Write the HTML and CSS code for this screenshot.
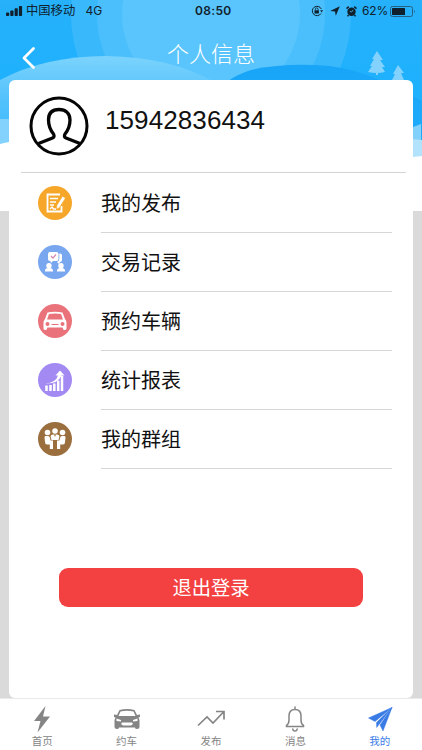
FILE: index.html
```html
<!DOCTYPE html>
<html lang="zh-CN">
<head>
<meta charset="utf-8">
<title>个人信息</title>
<link rel="stylesheet" href="styles.css">
</head>
<body>
<div class="screen">
  <svg class="scene" viewBox="0 0 422 211" width="422" height="211" aria-hidden="true">
    <defs>
      <linearGradient id="sky" x1="0" y1="0" x2="0" y2="1"><stop offset="0" stop-color="#26b1fa"/><stop offset=".55" stop-color="#1cb1ff"/><stop offset="1" stop-color="#38bbff"/></linearGradient>
      <linearGradient id="hill" x1="0" y1="0" x2="0" y2="1"><stop offset="0" stop-color="#7bd3fc"/><stop offset=".4" stop-color="#54c2fc"/><stop offset="1" stop-color="#32b6fc"/></linearGradient>
      <linearGradient id="ridge" x1="0" y1="0" x2="0" y2="1"><stop offset="0" stop-color="#18a5f8"/><stop offset="1" stop-color="#26b2ff"/></linearGradient>
    </defs>
    <rect width="422" height="211" fill="url(#sky)"/>
    <circle cx="211" cy="14" r="140" fill="#3ab8fc"/>
    <circle cx="211" cy="14" r="114" fill="#4bbffc"/>
    <circle cx="211" cy="14" r="89" fill="#5ac5fd"/>
    <path d="M211 100Q222 79 251 70Q285 62 330 66Q370 71 422 101V211H211Z" fill="url(#ridge)"/>
    <path d="M0 80Q45 56 106 56Q171 57 214 82V160H0Z" fill="url(#hill)"/>
    <path d="M0 119H30V160H0Z" fill="#83d2fd"/>
    <path d="M400 132L421 124V142H400Z" fill="#82d0fc"/>
    <path d="M400 138L422 140V160H400Z" fill="#b3e2fd"/>
    <path d="M0 144Q10 141 22 141H400L413 157L422 156V211H0Z" fill="#fff"/>
    <g fill="#83d2fe">
      <path d="M377 51L383 60H380L385 67H382L385 72Q377 74 368 72L372 66H370L374 59H372ZM376 72H378V75H376Z"/>
      <path d="M398 65L404 73H401L404 80H392L395 74H393Z"/>
    </g>
  </svg>

  <header class="status">
    <svg class="signal" viewBox="0 0 17 10"><rect x="0" y="6.5" width="3.2" height="3.5" rx=".8"/><rect x="4.3" y="4.5" width="3.2" height="5.5" rx=".8"/><rect x="8.6" y="2.3" width="3.2" height="7.7" rx=".8"/><rect x="12.9" y="0" width="3.2" height="10" rx=".8"/></svg>
    <span class="carrier">中国移动</span>
    <span class="network">4G</span>
    <span class="clock">08:50</span>
    <svg class="lock" viewBox="0 0 12 12"><path d="M10 8.5A4.7 4.7 0 1 1 10.3 4" fill="none" stroke="#10202c" stroke-width="1"/><path d="M9.2 5.3H12L10.7 7.4Z"/><rect x="3.5" y="5.2" width="4.4" height="3.4" rx=".4"/><path d="M4.4 5.4V4.2a1.3 1.3 0 0 1 2.6 0V5.4" fill="none" stroke="#10202c" stroke-width=".8"/></svg>
    <svg class="locate" viewBox="0 0 10 10"><path d="M9.8.2L5.8 9.8L5 5.600L.2 5Z"/></svg>
    <svg class="alarm" viewBox="0 0 11 11"><circle cx="5.5" cy="5.8" r="4.2"/><path d="M.5 2.6L2.8.6M10.5 2.6L8.2.6M2.5 9L1.5 10.4M8.5 9L9.5 10.4" stroke="#10202c" stroke-width="1.4"/><path d="M7.2 4L5.5 6L3.8 5.4" fill="none" stroke="#58bff6" stroke-width=".8"/></svg>
    <span class="percent">62%</span>
    <svg class="battery" viewBox="0 0 26 11"><rect x=".5" y=".5" width="22" height="10" rx="2" fill="none" stroke="#275f83"/><rect x="2" y="2" width="13" height="7" rx=".6"/><path d="M24 3.7Q25.8 5.5 24 7.3Z" fill="#275f83"/></svg>
  </header>

  <nav class="titlebar">
    <svg class="back" viewBox="0 0 14 24"><path d="M11.5 2.5L2 12L11.5 21.5" fill="none" stroke="#fff" stroke-width="2.8" stroke-linecap="round" stroke-linejoin="round"/></svg>
    <h1>个人信息</h1>
  </nav>

  <main class="card">
    <section class="profile">
      <svg class="avatar" viewBox="0 0 60 60"><g fill="none" stroke="#050505" stroke-linejoin="round"><circle cx="30" cy="30" r="28" stroke-width="3"/><path d="M9.5 47.5L23.5 42Q26 41 24.5 38C20.500 33 19.500 29 19.500 24C19.500 17 23.500 13.500 30 13.500S41 17 41 24C41 29 40 33 36 38Q34.500 41 37 42L51 47.500" stroke-width="3.300"/></g></svg>
      <span class="phone">15942836434</span>
    </section>

    <ul class="menu">
      <li>
        <svg class="badge" viewBox="0 0 34 34"><circle cx="17" cy="17" r="17" fill="#f6a72a"/><path d="M22 8.500H9.500V25.500H23.500V20" fill="none" stroke="#fff" stroke-width="1.800"/><path d="M12 12.500H20M12 16H18M12 19H16M12 23L14 21L15.500 23H18" fill="none" stroke="#fff" stroke-width="1.300"/><path d="M24.500 10.200L27.500 12L21.500 21.500L18.500 23.500L18.800 19.500Z" fill="#fff" stroke="#f6a72a" stroke-width=".6"/></svg>
        <span>我的发布</span>
      </li>
      <li>
        <svg class="badge" viewBox="0 0 34 34"><circle cx="17" cy="17" r="17" fill="#79a7ef"/><g fill="#fff"><path d="M21.300 8.500H22Q24 8.500 24 10.500V15Q24 17 22 17L21 19L19 17Q21.300 16 21.300 14Z"/><rect x="10" y="7" width="10.500" height="9" rx="2"/><path d="M12 15L13 18L16 15Z"/><circle cx="11" cy="20.800" r="2.700"/><circle cx="23" cy="20.800" r="2.700"/><path d="M7 26.500V25Q7.500 23 10 23H12Q14 23 15 25V26.500ZM19 26.500V25Q20 23 22 23H24Q26 23 27 25V26.500Z"/></g><path d="M13 11L15 13L18 9.500" fill="none" stroke="#d58ab4" stroke-width="1.200"/></svg>
        <span>交易记录</span>
      </li>
      <li>
        <svg class="badge" viewBox="0 0 34 34"><circle cx="17" cy="17" r="17" fill="#ea737b"/><path d="M9.500 8.500Q17 6.800 24.500 8.500L27 15Q28.500 16.500 28.500 18.500V24.500Q28.500 26 26.500 26Q24.700 26 24.700 23.500H9.300Q9.300 26 7.500 26Q5.500 26 5.500 24.500V18.500Q5.500 16.500 7 15Z" fill="#fff"/><path d="M11 10Q17 9 23 10L25 15.500H9Z" fill="#ea737b"/><circle cx="9.500" cy="20" r="2" fill="#ea737b"/><circle cx="24.500" cy="20" r="2" fill="#ea737b"/><path d="M13.500 20.500H20.500" stroke="#ea737b"/></svg>
        <span>预约车辆</span>
      </li>
      <li>
        <svg class="badge" viewBox="0 0 34 34"><circle cx="17" cy="17" r="17" fill="#a28af2"/><path d="M8.500 28V22.500M12.500 28V22M16.300 28V20.500M20.200 28V17.500M24 28V13" stroke="#fff" stroke-width="2.500"/><path d="M7.500 20.500Q18 19.500 20 12.500H17.500L22 7.500L26.500 12.500H23.500Q20 21 7.500 20.500Z" fill="#fff"/></svg>
        <span>统计报表</span>
      </li>
      <li>
        <svg class="badge" viewBox="0 0 34 34"><circle cx="17" cy="17" r="17" fill="#9b6e3e"/><g fill="#fff"><circle cx="9.500" cy="10.500" r="2.800"/><circle cx="17" cy="9" r="2.800"/><circle cx="24.500" cy="10.500" r="2.800"/><path d="M7.500 14H10Q11.500 14 12 16L12.500 18.500H15V27H11.800V22.500H9Q7 22.500 7 20L6.500 15.500Q6.500 14 7.500 14ZM26.500 14H24Q22.500 14 22 16L21.500 18.500H19V27H22.200V22.500H25Q27 22.500 27 20L27.500 15.500Q27.500 14 26.500 14ZM12.500 14Q13 12.500 15 12.500H19Q21 12.500 21.500 14L20.500 18H13.500Z"/></g><path d="M16 12.500H18L17 15Z" fill="#9b6e3e"/></svg>
        <span>我的群组</span>
      </li>
    </ul>

    <button class="logout">退出登录</button>
  </main>

  <footer class="tabs">
    <a><svg viewBox="0 0 28 28"><path d="M17.500 1L6 16H12.500L9.500 27.500L22 11.500H15Z" fill="#858585"/></svg><span>首页</span></a>
    <a><svg viewBox="0 0 28 28"><path d="M6.500 5Q14 3 21.500 5L24 10L27 9.500V12L25.500 12.500L26.500 15V22Q26.500 24 24 24Q22 24 22 22.500H6Q6 24 4 24Q1.500 24 1.500 22V15L2.500 12.500L1 12V9.500L4 10Z" fill="#858585"/><path d="M7.500 6.500Q14 5 20.500 6.500L22.500 11H5.500ZM3.500 13.500L8 15V16.500L3.500 16ZM24.500 13.500L20 15V16.500L24.500 16ZM9 17.500H19L20 19L18 20.500H10L8 19Z" fill="#fff"/></svg><span>约车</span></a>
    <a><svg viewBox="0 0 28 28"><path d="M1 20.500L10 12L16 18L26.500 7M19 6.500H27V14.500" fill="none" stroke="#858585" stroke-width="1.700"/></svg><span>发布</span></a>
    <a><svg viewBox="0 0 28 28"><path d="M5.500 21.500V20.500Q8 19 8 15V11C8 6.500 10.500 4.500 14 4.500S20 6.500 20 11V15Q20 19 22.500 20.500V21.500ZM14 2V4.500M11.800 24Q12 26 14 26T16.200 24" fill="none" stroke="#858585" stroke-width="1.500" stroke-linecap="round"/></svg><span>消息</span></a>
    <a class="active"><svg viewBox="0 0 28 28"><path d="M26 2.500L2.500 13L9 16.500ZM26 2.500L10.500 17.500L10.700 22.500L13.200 19.200ZM26 2.500L14 20L17 26Z" fill="#397be5" stroke="#397be5" stroke-width=".5"/></svg><span>我的</span></a>
  </footer>
</div>
</body>
</html>
```
FILE: styles.css
```css
* { box-sizing: border-box; }

body {
  margin: 0;
  font-family: "Liberation Sans", "Noto Sans CJK SC", sans-serif;
  color: #111;
}

.screen {
  position: relative;
  isolation: isolate;
  display: flex;
  flex-direction: column;
  width: 422px;
  height: 750px;
  overflow: hidden;
  background: #dadada;
}

svg { display: block; flex: none; }

.scene {
  position: absolute;
  inset: 0 auto auto 0;
  z-index: -1;
}

.status {
  display: flex;
  align-items: center;
  height: 22px;
  padding: 0 6px;
  font: 12px/22px Inter, "Noto Sans CJK SC", sans-serif;
  color: #10202c;
  fill: #10202c;
  white-space: nowrap;
}

.signal { width: 17px; height: 10px; margin-right: 3px; }
.carrier { width: 59.5px; font-size: 12.3px; }
.network { width: 109.5px; }
.clock { width: 116px; font-weight: 600; letter-spacing: .35px; }
.lock { width: 12px; height: 12px; }
.locate { width: 10px; height: 10px; margin-left: 7px; }
.alarm { width: 11px; height: 11px; margin-left: 6px; }
.percent { width: 28px; margin-left: 5px; letter-spacing: -.1px; }
.battery { width: 26px; height: 11px; }

.titlebar {
  display: grid;
  grid-template-columns: 60px 1fr 60px;
  align-items: center;
  height: 58px;
}

.back { width: 14px; height: 24px; margin: 14px 0 0 22px; }

h1 {
  margin: 7px 0 0;
  text-align: center;
  font-size: 22px;
  font-weight: 300;
  line-height: 32px;
  color: #fff;
}

.card {
  height: 618px;
  margin: 0 9px;
  background: #fff;
  border-radius: 6px;
}

.profile {
  display: flex;
  height: 93px;
  margin: 0 7px 0 12px;
  padding: 16px 0 0 8px;
  border-bottom: 1px solid #d4d4d4;
}

.avatar { width: 60px; height: 60px; }

.phone {
  margin: 9px 0 0 16px;
  font-size: 26px;
  line-height: 30px;
  letter-spacing: .1px;
}

.menu {
  margin: 0;
  padding: 1px 21px 0 29px;
  list-style: none;
}

.menu li {
  display: flex;
  align-items: center;
  gap: 29px;
  height: 59.1px;
}

.badge { width: 34px; height: 34px; margin-bottom: 1px; }

.menu span {
  flex: 1;
  height: 100%;
  padding-top: 1px;
  border-bottom: 1px solid #d6d6d6;
  font-size: 20px;
  line-height: 59px;
}

.logout {
  display: block;
  width: 304px;
  height: 39px;
  margin: 98.500px 0 0 50px;
  padding: 0;
  border: 0;
  border-radius: 9px;
  background: #f34041;
  color: #fff;
  font: 19.300px/39px "Noto Sans CJK SC", sans-serif;
}

.tabs {
  display: grid;
  grid-template-columns: repeat(5, 1fr);
  height: 52px;
  background: #fff;
  border-top: 1px solid #e9e9e9;
}

.tabs a {
  display: flex;
  flex-direction: column;
  align-items: center;
  padding-top: 6px;
  font-size: 10.500px;
  line-height: 16px;
  color: #858585;
}

.tabs svg { width: 28px; height: 28px; }
.tabs .active { color: #397be5; }
```
